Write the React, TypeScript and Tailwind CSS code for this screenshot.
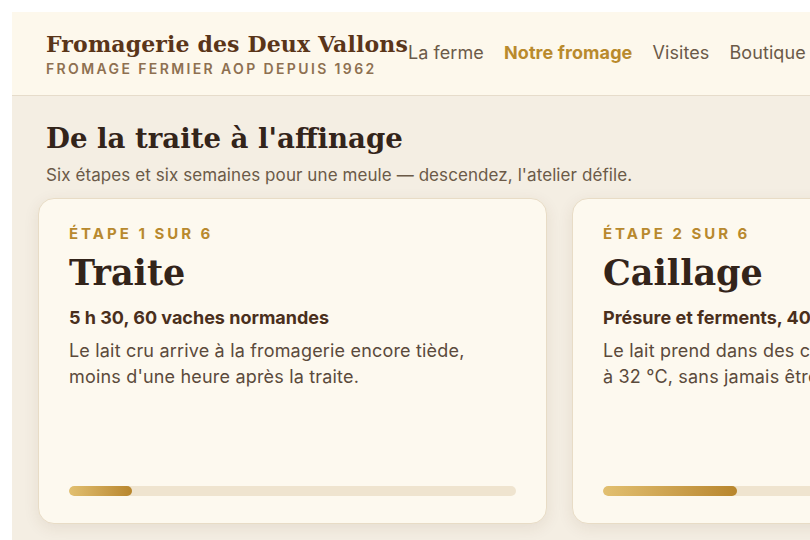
import React from 'react';

const serif = { fontFamily: '"DejaVu Serif", Georgia, serif' };

const steps = [
  {
    n: 1,
    title: 'Traite',
    lead: '5 h 30, 60 vaches normandes',
    lines: ['Le lait cru arrive à la fromagerie encore tiède,', "moins d'une heure après la traite."],
    pct: 14,
  },
  {
    n: 2,
    title: 'Caillage',
    lead: 'Présure et ferments, 40 minutes',
    lines: ['Le lait prend dans des cuves de cuivre', 'à 32 °C, sans jamais être chauffé.'],
    pct: 30,
  },
];

function StepCard({ step }: { step: (typeof steps)[number] }) {
  return (
    <article className="flex h-[326px] w-[509px] shrink-0 flex-col rounded-2xl border border-[#e8dcc6] bg-[#fdf9ef] px-[30px] pt-[24px] pb-[27px] shadow-[0_4px_16px_rgba(90,60,20,0.09)]">
      <div className="text-[15px] leading-[22px] font-bold uppercase tracking-[0.2em] text-[#b8892e]">
        Étape {step.n} sur 6
      </div>
      <h2 style={serif} className="mt-[5px] text-[35px] leading-[46px] font-bold text-[#33241a]">
        {step.title}
      </h2>
      <p className="mt-[10px] text-[18px] leading-[24px] font-bold whitespace-nowrap text-[#4a2f1c]">{step.lead}</p>
      <p className="mt-[8px] text-[18px] leading-[26px] tracking-[0.01em] whitespace-nowrap text-[#5b4a3b]">
        {step.lines[0]}
        <br />
        {step.lines[1]}
      </p>
      <div className="mt-auto h-[10px] w-full overflow-hidden rounded-full bg-[#efe4cf]">
        <div
          className="h-full rounded-full bg-gradient-to-r from-[#e2c070] to-[#b8862c]"
          style={{ width: `${step.pct}%` }}
        />
      </div>
    </article>
  );
}

export default function App() {
  return (
    <div
      className="h-[540px] w-[810px] overflow-hidden bg-white pt-3 pl-3"
      style={{ fontFamily: 'Inter, "Noto Sans", sans-serif' }}
    >
      <div className="h-full w-[1100px] bg-[#f4eee3]">
        <header className="flex h-[84px] items-center border-b border-[#e6dccb] bg-[#fdf8ec] pl-[34px]">
          <div className="pt-[1px]">
            <div
              style={serif}
              className="text-[22px] leading-[27px] font-bold tracking-[0.006em] whitespace-nowrap text-[#5a3519]"
            >
              Fromagerie des Deux Vallons
            </div>
            <div className="mt-[2px] text-[14px] leading-[17px] font-semibold tracking-[0.17em] whitespace-nowrap text-[#8e7051]">
              FROMAGE FERMIER AOP DEPUIS 1962
            </div>
          </div>
          <nav className="flex items-center gap-[20px] pb-[2px] text-[18px] tracking-[0.005em] whitespace-nowrap text-[#6b5a48]">
            <a>La ferme</a>
            <a className="font-bold text-[#b98a2d]">Notre fromage</a>
            <a>Visites</a>
            <a>Boutique</a>
            <a>Contact</a>
          </nav>
        </header>
        <section className="pt-[24px] pl-[34px]">
          <h1 style={serif} className="text-[27.6px] leading-[38px] font-bold text-[#33241a]">
            De la traite à l'affinage
          </h1>
          <p className="mt-[6px] text-[17px] leading-[22px] tracking-[0.005em] text-[#6b5a48]">
            Six étapes et six semaines pour une meule — descendez, l'atelier défile.
          </p>
        </section>
        <div className="mt-[12px] flex gap-[25px] pl-[26px]">
          {steps.map((s) => (
            <StepCard key={s.n} step={s} />
          ))}
        </div>
      </div>
    </div>
  );
}
